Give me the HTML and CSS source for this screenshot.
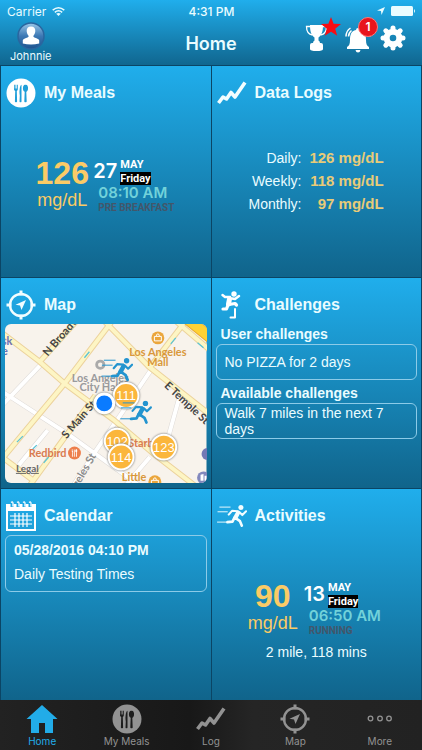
FILE: index.html
```html
<!DOCTYPE html>
<html lang="en">
<head>
    <meta charset="UTF-8">
    <meta name="viewport" content="width=device-width, initial-scale=1.0">
    <title>Home</title>
    <link rel="stylesheet" href="styles.css">
</head>
<body>
    <!-- shared icons -->
    <svg class="sprite" aria-hidden="true">
        <symbol id="runner" viewBox="0 0 32 24">
            <g fill="none" stroke="currentColor" stroke-linecap="round" stroke-linejoin="round">
                <path stroke-width="1" d="M3 2.500h11M1 7.500h10M.5 18.500h9"/>
                <path stroke-width="4.500" d="M22.500 8.500l-3 5.500"/>
                <path stroke-width="2.200" d="M22 7l-6-.5-3.500 4M24 8l3 3 4-4"/>
                <path stroke-width="2.800" d="M19.500 14l5 3.500 2 4.800M18.500 14l-2 4-5.500.5"/>
            </g>
            <circle cx="25.500" cy="3" r="2.700" fill="currentColor"/>
        </symbol>
        <symbol id="compass" viewBox="0 0 30 30">
            <g fill="none" stroke="currentColor">
                <circle cx="15" cy="15" r="11" stroke-width="2.400"/>
                <path stroke-width="3" d="M15 .5v5M15 24.500v5M.5 15h5M24.500 15h5"/>
            </g>
            <path fill="currentColor" d="M20 10l-4.500 10-1.500-4.500-4.500-.8z"/>
        </symbol>
        <symbol id="chart" viewBox="0 0 30 24">
            <path fill="none" stroke="currentColor" stroke-width="3.600" stroke-linejoin="round" d="M1.500 22l4.500-6 3.500 2 4.500-6.500 4 4.500L28 1.500"/>
        </symbol>
        <symbol id="cutlery" viewBox="0 0 14 18">
            <path fill="currentColor" d="M0 0h.8v4h.7V0h.8v4H3V0h.8v5q0 1-1 1.400l.3 10.600q-.1 1-1.100 1t-1.100-1l.3-10.600Q0 6 0 5zM7.500 0v17q0 1-1 1t-1-1l.3-6q-.8-4 .2-8.500.5-2 1.500-2.500zM11.500 0c3.300 0 3.300 6.500.8 7.200l.4 9.800q-.2 1-1.200 1t-1.200-1l.4-9.800C8.200 6.500 8.200 0 11.500 0z"/>
        </symbol>
    </svg>

    <header>
        <div class="status">
            <span class="carrier">Carrier
                <svg width="13" height="9" viewBox="0 0 13 9" fill="none" stroke="currentColor" stroke-width="1.500">
                    <path d="M.7 3.200q5.800-4.700 11.600 0M2.800 5.300q3.700-3 7.400 0"/>
                    <path fill="currentColor" stroke="none" d="M4.200 6.800q2.300-1.600 4.600 0L6.500 9z"/>
                </svg>
            </span>
            <span class="time">4:31 PM</span>
            <span class="power">
                <svg width="8" height="8" viewBox="0 0 8 8" fill="currentColor"><path d="M8 0L4.500 8 4 4 0 3.500z"/></svg>
                <svg width="25" height="10" viewBox="0 0 25 10" fill="currentColor"><rect width="22" height="10" rx="1.500"/><path d="M23 3q2 2 0 4z"/></svg>
            </span>
        </div>
        <div class="navbar">
            <button class="profile">
                <svg width="28" height="28" viewBox="0 0 28 28">
                    <defs>
                        <linearGradient id="ball" x2="0" y2="1">
                            <stop offset="0" stop-color="#9cc8e8"/>
                            <stop offset=".5" stop-color="#3c78b4"/>
                            <stop offset="1" stop-color="#1d548f"/>
                        </linearGradient>
                    </defs>
                    <circle cx="14" cy="14" r="13" fill="url(#ball)" stroke="#2a669f" stroke-width="1.500"/>
                    <path fill="#fff" d="M14 4.500c3 0 4.500 2 4.300 4.800-.2 2.200-1 3.700-2 4.700 0 2 5.200 2 5.900 4.200v3.300q-8.200 2-16.400 0v-3.300c.7-2.200 5.900-2.200 5.900-4.200-1-1-1.800-2.500-2-4.700-.2-2.800 1.300-4.800 4.300-4.800z"/>
                </svg>
                <span>Johnnie</span>
            </button>
            <h1>Home</h1>
            <div class="actions">
                <button aria-label="Rewards">
                    <svg width="36" height="38" viewBox="0 0 36 38">
                        <g fill="#fff">
                            <path d="M5 11h13c0 6-1 10-4.500 12.500v3q1.500.5 1.500 2.500h1q2 0 2 2v4q0 2-6.500 2T5 35v-4q0-2 2-2h1q0-2 1.500-2.500v-3C6 21 5 17 5 11z"/>
                            <path fill="none" stroke="#fff" stroke-width="1.300" d="M5.500 12.500h-4q0 7.500 6 8.500M17.500 12.500h4q0 7.500-6 8.500"/>
                        </g>
                        <path fill="#f80c12" d="M26 3l2.600 6.800 7.400.3-5.800 4.600 2 7.100-6.200-4.100-6.200 4.100 2-7.100L16 10.100l7.400-.3z"/>
                    </svg>
                </button>
                <button aria-label="Notifications" class="bell">
                    <svg width="26" height="27" viewBox="0 0 26 27">
                        <path fill="#fff" d="M13 2q2 0 2 2c5 1 6 5 6 10 0 4 1 6 3 7v2H2v-2c2-1 3-3 3-7 0-5 1-9 6-10q0-2 2-2zM10.500 24h5q-.5 2.500-2.500 2.500T10.500 24z"/>
                        <path fill="none" stroke="#fff" stroke-width="1.500" d="M1 10.500Q1 5 5.500 2M3.500 10.500q0-3.500 3-6M25 10.500Q25 5 20.500 2"/>
                    </svg>
                    <span class="badge">1</span>
                </button>
                <button aria-label="Settings">
                    <svg width="26" height="26" viewBox="-13 -13 26 26">
                        <path stroke="#fff" stroke-width="5" stroke-linecap="round" d="M0-10v3M0 7v3M-10 0h3M7 0h3M-7.200-7.200l2 2M5.200 5.200l2 2M-7.200 7.200l2-2M5.200-5.200l2-2"/>
                        <circle r="6.300" fill="none" stroke="#fff" stroke-width="6"/>
                    </svg>
                </button>
            </div>
        </div>
    </header>

    <main>
        <section class="card">
            <h2>
                <svg class="icon" viewBox="0 0 30 30"><circle cx="15" cy="15" r="14.500" fill="#fff"/><use href="#cutlery" class="cut" x="8" y="6.500" width="14" height="18"/></svg>
                My Meals
            </h2>
            <div class="stats">
                <div class="reading"><strong>126</strong><span>mg/dL</span></div>
                <div class="when">
                    <div class="date"><b>27</b><span class="month">MAY<em>Friday</em></span></div>
                    <div class="hour">08:10 AM</div>
                    <div class="kind">PRE BREAKFAST</div>
                </div>
            </div>
        </section>

        <section class="card">
            <h2>
                <svg class="icon" viewBox="0 0 30 30"><use href="#chart" y="3" width="30" height="24"/></svg>
                Data Logs
            </h2>
            <table class="logs">
                <tr><th scope="row">Daily:</th><td>126 mg/dL</td></tr>
                <tr><th scope="row">Weekly:</th><td>118 mg/dL</td></tr>
                <tr><th scope="row">Monthly:</th><td>97 mg/dL</td></tr>
            </table>
        </section>

        <section class="card">
            <h2>
                <svg class="icon" viewBox="0 0 30 30"><use href="#compass" width="30" height="30"/></svg>
                Map
            </h2>
            <svg class="map" viewBox="0 0 203 161" preserveAspectRatio="xMidYMid slice">
                <rect width="203" height="161" fill="#f8f3ec"/>
                <!-- side streets -->
                <g class="street-edge">
                    <path d="M-3 68L65 112l72 52M38 39L-3 82M43 107L14 142M148 45l-34 50-22 32-26 40M175 76l-10 36M146 134l-24 28"/>
                </g>
                <g class="street">
                    <path d="M-3 68L65 112l72 52M38 39L-3 82M43 107L14 142M148 45l-34 50-22 32-26 40M175 76l-10 36M146 134l-24 28"/>
                </g>
                <!-- main roads -->
                <g class="road-edge">
                    <path d="M-3 9l38 29 25 22 50 37 40 34 44 34M72-3L35 38M100-3l45 46 61 48M108-3L60 60-3 136M182-3l-37 48M91 72L56 120l-32 44M-3 134l32 24M172-3l34 29"/>
                </g>
                <g class="road">
                    <path d="M-3 9l38 29 25 22 50 37 40 34 44 34M72-3L35 38M100-3l45 46 61 48M108-3L60 60-3 136M182-3l-37 48M91 72L56 120l-32 44M-3 134l32 24M172-3l34 29"/>
                </g>
                <path stroke="#e9ab2e" stroke-width="12" d="M184-5l26 21"/>
                <path stroke="#ffd234" stroke-width="10" d="M184-5l26 21"/>
                <path stroke="#5cc4d6" stroke-width="1.300" fill="none" d="M80 34l5-6M167 20l5-6M12 119l6-6M194 19l6 5M28 126l4-4M39 140l5-6"/>

                <g class="street-name">
                    <text transform="translate(43 33) rotate(-49)">N Broadway</text>
                    <text transform="translate(62 116) rotate(-49)">S Main St</text>
                    <text transform="translate(160 63) rotate(43)">E Temple St</text>
                    <text class="faint" transform="translate(92 133) rotate(-60)">Angeles St</text>
                </g>
                <g class="place">
                    <circle cx="96" cy="41" r="3.700" fill="none" stroke="#aaa" stroke-width="2.800"/>
                    <text class="gray" x="96" y="58">Los Angeles</text>
                    <text class="gray" x="96" y="68">City Hall</text>
                    <circle cx="154" cy="14" r="6.500" fill="#eba63c"/>
                    <path fill="none" stroke="#fff" d="M150.500 12.500h7v4.500h-7zM152.500 12q0-2 1.500-2t1.500 2"/>
                    <text class="mall" x="154" y="32">Los Angeles</text>
                    <text class="mall" x="154" y="42">Mall</text>
                    <text x="43" y="134">Redbird</text>
                    <circle cx="70" cy="130" r="6.500" fill="#ed7f4c"/>
                    <use href="#cutlery" color="#fff" x="67" y="126" width="6" height="8"/>
                    <text class="mall" x="130" y="158">Little</text>
                    <circle cx="151" cy="159" r="6.500" fill="#eba63c"/>
                    <path fill="none" stroke="#fff" d="M147.500 157.500h7v4.500h-7zM149.500 157q0-2 1.500-2t1.500 2"/>
                    <text x="137" y="124">Starb</text>
                    <text class="blue" x="2" y="21">sk</text>
                    <text class="blue" x="0" y="31">e</text>
                    <circle cx="204" cy="131" r="6" fill="#7378b5"/>
                    <circle cx="200" cy="155" r="6.500" fill="#8288bd"/>
                    <path fill="#fff" d="M197 158v-6l3-1v7zM201 158v-5h2v5z"/>
                </g>
                <text class="legal" x="11" y="149">Legal</text>

                <use href="#runner" class="walker" x="97" y="34" width="32" height="24"/>
                <g class="pin">
                    <circle cx="122" cy="72" r="12.500"/>
                    <text x="122" y="77">111</text>
                    <circle cx="113" cy="118" r="12.500"/>
                    <text x="113" y="123">102</text>
                    <circle cx="117" cy="134" r="12.500"/>
                    <text x="117" y="139">114</text>
                    <circle cx="160" cy="124" r="12.500"/>
                    <text x="160" y="129">123</text>
                    <circle class="me" cx="100" cy="80" r="9.500"/>
                </g>
                <use href="#runner" class="walker" x="116" y="77" width="32" height="24"/>
            </svg>
        </section>

        <section class="card">
            <h2>
                <svg class="icon" viewBox="0 0 30 30">
                    <circle cx="17" cy="4" r="2.700" fill="#fff"/>
                    <g fill="none" stroke="#fff" stroke-linecap="round" stroke-linejoin="round">
                        <path stroke-width="5" d="M12.500 9l-1 5"/>
                        <path stroke-width="2.500" d="M13 7H8L5.500 5M15 8.500l3 .5 4-3"/>
                        <path stroke-width="3.200" d="M12 14.500l6-1 1.500 1.500M11 15l-1.500 4H6"/>
                        <path stroke-width="2" d="M18 19v8.500h-4.500"/>
                    </g>
                </svg>
                Challenges
            </h2>
            <h3>User challenges</h3>
            <div class="box challenge">No PIZZA for 2 days</div>
            <h3>Available challenges</h3>
            <div class="box challenge">Walk 7 miles in the next 7 days</div>
        </section>

        <section class="card">
            <h2>
                <svg class="icon" viewBox="0 0 30 30">
                    <path fill="#fff" fill-rule="evenodd" d="M0 3h30v27H0zM2 10v18h26V10z"/>
                    <path fill="none" stroke="#fff" stroke-width="1.200" d="M4 15h22M4 19h22M4 23h22M9 12v14M13 12v14M17 12v14M21 12v14"/>
                    <path fill="none" stroke="#1fa8e4" stroke-width="3" d="M6 1v5M12 1v5M18 1v5M24 1v5"/>
                    <path fill="none" stroke="#fff" stroke-width="1.300" d="M5 1.500q2-1.500 2 1v3M11 1.500q2-1.500 2 1v3M17 1.500q2-1.500 2 1v3M23 1.500q2-1.500 2 1v3"/>
                </svg>
                Calendar
            </h2>
            <div class="box event"><b>05/28/2016 04:10 PM</b><span>Daily Testing Times</span></div>
        </section>

        <section class="card">
            <h2>
                <svg class="icon" viewBox="0 0 30 30"><use href="#runner" y="3" width="30" height="24"/></svg>
                Activities
            </h2>
            <div class="stats">
                <div class="reading"><strong>90</strong><span>mg/dL</span></div>
                <div class="when">
                    <div class="date"><b>13</b><span class="month">MAY<em>Friday</em></span></div>
                    <div class="hour">06:50 AM</div>
                    <div class="kind">RUNNING</div>
                </div>
            </div>
            <p>2 mile, 118 mins</p>
        </section>
    </main>

    <nav>
        <a href="#home" class="active">
            <svg viewBox="0 0 30 30" fill="currentColor"><path d="M15 1l15.500 14H26v14h-8V19h-6v10H4V15H-.5z"/></svg>
            Home
        </a>
        <a href="#meals">
            <svg viewBox="0 0 30 30"><circle cx="15" cy="15" r="14.500" fill="currentColor"/><use href="#cutlery" color="#1d1d1d" x="8" y="6.500" width="14" height="18"/></svg>
            My Meals
        </a>
        <a href="#log">
            <svg viewBox="0 0 30 30"><use href="#chart" y="3" width="30" height="24"/></svg>
            Log
        </a>
        <a href="#map">
            <svg viewBox="0 0 30 30"><use href="#compass" width="30" height="30"/></svg>
            Map
        </a>
        <a href="#more">
            <svg viewBox="0 0 30 30" fill="none" stroke="currentColor" stroke-width="1.300"><circle cx="5.500" cy="14.500" r="2.300"/><circle cx="15" cy="14.500" r="2.300"/><circle cx="24" cy="14.500" r="2.300"/></svg>
            More
        </a>
    </nav>
</body>
</html>
```
FILE: styles.css
```css
* {
    box-sizing: border-box;
}
body {
    margin: 0;
    min-height: 100vh;
    display: flex;
    flex-direction: column;
    background: #0b4565;
    color: #eafcff;
    font-family: "Liberation Sans", Arial, sans-serif;
    font-size: 14px;
}
h1, h2, h3, p {
    margin: 0;
}
svg {
    display: block;
}
.sprite {
    position: absolute;
    width: 0;
    height: 0;
}

/* top bar */
header {
    height: 65px;
    background: linear-gradient(#20aeec, #10668f);
    font-family: Inter, sans-serif;
}
.status {
    display: grid;
    grid-template-columns: 1fr auto 1fr;
    align-items: center;
    height: 22px;
    padding: 0 6px 0 7px;
    font-size: 12px;
}
.carrier, .power {
    display: flex;
    align-items: center;
    gap: 6px;
}
.power {
    justify-content: flex-end;
}
.time {
    font-weight: 500;
}
.navbar {
    display: grid;
    grid-template-columns: 1fr auto 1fr;
    height: 43px;
}
header button {
    padding: 0;
    border: 0;
    background: none;
    color: inherit;
    font: inherit;
    cursor: pointer;
}
.profile {
    justify-self: start;
    display: flex;
    flex-direction: column;
    align-items: center;
    margin-left: 10px;
}
.profile span {
    font-size: 11px;
    line-height: 12px;
}
h1 {
    font-size: 18px;
    line-height: 44px;
    font-weight: 600;
}
.actions {
    justify-self: end;
    display: flex;
    align-items: flex-start;
    gap: 4px;
    margin-right: 16px;
}
.actions button:first-child {
    margin-top: -8px;
}
.actions button:last-child {
    margin: 3px 0 0 5px;
}
.bell {
    position: relative;
}
header .bell {
    margin-top: 4px;
}
.badge {
    position: absolute;
    top: -9px;
    right: -7px;
    width: 20px;
    height: 20px;
    border: 1px solid #f77;
    border-radius: 50%;
    background: #e8141c;
    color: #fff;
    font-size: 12px;
    line-height: 18px;
    font-weight: 600;
}

/* dashboard */
main {
    flex: 1;
    display: grid;
    grid-template-columns: 1fr 1fr;
    grid-template-rows: repeat(3, 1fr);
    gap: 1px;
    padding: 1px 1px 0;
}
.card {
    padding: 12px 4px 4px;
    background: linear-gradient(#20aeec, #10648b);
    min-width: 0;
}
h2 {
    display: flex;
    align-items: center;
    gap: 8px;
    margin: 0 0 4px 1px;
    font-size: 16px;
    line-height: 30px;
}
.icon {
    width: 30px;
    height: 30px;
    color: #f2fdff;
}
.cut {
    color: #1f9fd9;
}
h3 {
    padding-left: 5px;
    font-size: 14px;
    line-height: 20px;
}
.box {
    display: flex;
    border: 1px solid #8ccbe8;
    border-radius: 6px;
    padding: 0 8px;
    line-height: 16px;
}
.challenge {
    align-items: center;
    height: 36px;
    margin-bottom: 3px;
}
.event {
    flex-direction: column;
    gap: 8px;
    padding: 6px 8px 9px;
}

.stats {
    display: flex;
    justify-content: center;
    gap: 5px;
    margin-top: 49px;
}
.reading {
    display: flex;
    flex-direction: column;
    align-items: center;
    width: 52px;
    color: #fbcb66;
}
.reading strong {
    font-size: 32px;
    line-height: 32px;
}
.reading span {
    font-size: 18px;
    line-height: 22px;
}
.when {
    width: 82px;
    font-family: Inter, sans-serif;
    font-weight: 600;
}
.date {
    display: flex;
    align-items: center;
    gap: 3px;
    color: #fff;
}
.date b {
    font-size: 20px;
    line-height: 28px;
    font-weight: 600;
}
.month {
    font: bold 11px/14px Roboto, sans-serif;
}
.month em {
    display: block;
    background: #000;
    font-style: normal;
    line-height: 13px;
}
.hour, .kind {
    padding-left: 5px;
    white-space: nowrap;
}
.hour {
    color: #72d2da;
    font-size: 15px;
    line-height: 16px;
}
.kind {
    color: #43566a;
    font: bold 10px/14px Roboto, sans-serif;
}
.card p {
    margin-top: 6px;
    text-align: center;
}

.logs {
    margin: 38px 0 0 25px;
    border-collapse: collapse;
}
.logs th, .logs td {
    padding: 0 0 0 8px;
    height: 23px;
    text-align: right;
}
.logs th {
    font-weight: normal;
}
.logs td {
    color: #e8cb78;
    font-size: 15px;
    font-weight: bold;
}

/* map */
.map {
    width: 100%;
    border-radius: 6px;
}
.road-edge, .road, .street-edge, .street {
    fill: none;
}
.road-edge {
    stroke: #ecd29c;
    stroke-width: 6px;
}
.road {
    stroke: #fdf5c4;
    stroke-width: 4px;
}
.street-edge {
    stroke: #ddd9d6;
    stroke-width: 5px;
}
.street {
    stroke: #fff;
    stroke-width: 4px;
}
.map text {
    font-family: Lato, sans-serif;
}
.street-name text {
    fill: #444;
    font-size: 11px;
    font-weight: bold;
}
.street-name .faint {
    fill: #8a8a8a;
    text-anchor: end;
}
.place text {
    fill: #d97b50;
    font-size: 11px;
    font-weight: bold;
    text-anchor: middle;
}
.place .gray {
    fill: #9a9a9c;
}
.place .mall {
    fill: #d9983a;
}
.place .blue {
    fill: #6a70b4;
}
.map .legal {
    fill: #666;
    font-size: 10px;
    font-weight: bold;
    text-decoration: underline;
}
.pin circle {
    fill: #fbb63c;
    stroke: #fff;
    stroke-width: 2px;
    filter: drop-shadow(0 0 1px #666);
}
.pin .me {
    fill: #0a7bff;
    stroke-width: 3px;
}
.pin text {
    fill: #fff;
    font-family: "Liberation Sans", sans-serif;
    font-size: 13px;
    text-anchor: middle;
}
.walker {
    color: #2394cf;
}

/* bottom tabs */
nav {
    display: flex;
    height: 50px;
    background: linear-gradient(90deg, #222, #181818 45%, #252525 60%, #222);
}
nav a {
    flex: 1;
    display: flex;
    flex-direction: column;
    align-items: center;
    padding-top: 4px;
    color: #929292;
    font: 10px/14px Inter, sans-serif;
    text-decoration: none;
}
nav a.active {
    color: #22ace8;
}
nav svg {
    width: 30px;
    height: 30px;
    overflow: visible;
}
```
